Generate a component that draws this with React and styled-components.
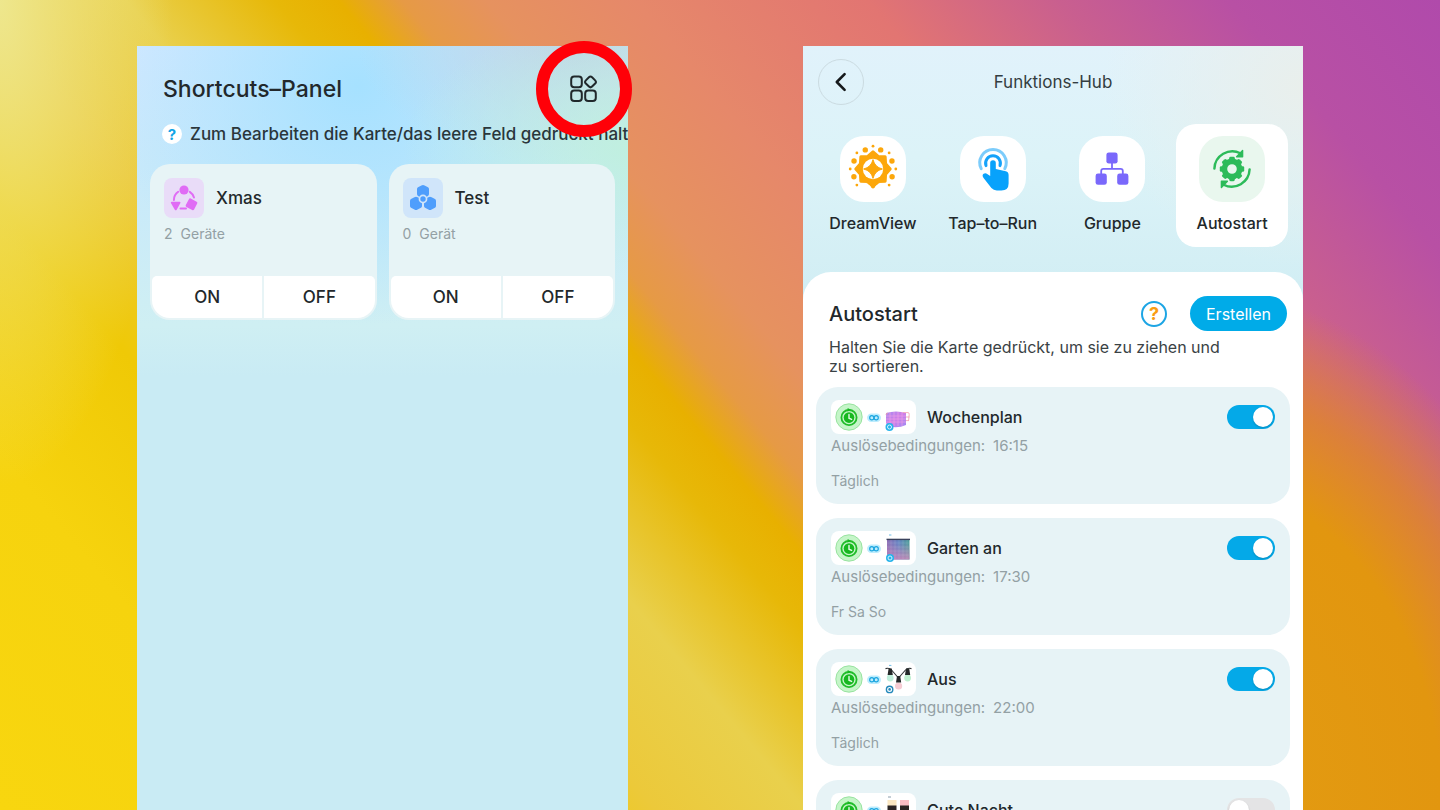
import React from "react";
import styled, { createGlobalStyle, css } from "styled-components";

const GlobalStyle = createGlobalStyle`
  *, *::before, *::after { box-sizing: border-box; }
  body {
    margin: 0;
    font-family: Inter, "Liberation Sans", sans-serif;
    color: #22282b;
  }
  button { font: inherit; color: inherit; cursor: pointer; }
  h1, h2, h3, p, ul { margin: 0; padding: 0; font-weight: 400; }
`;

const Page = styled.div`
  display: grid;
  grid-template-columns: 137fr 491fr 175fr 500fr 137fr;
  height: 100vh;
  padding-top: 46px;
  overflow: hidden;
  background:
    radial-gradient(ellipse 26% 64% at 84% 100%, #e39c12 0%, #e2960f 62%, rgba(222, 134, 40, 0.8) 80%, rgba(222, 120, 80, 0) 100%),
    radial-gradient(ellipse 12% 60% at 0% 0%, rgba(238, 234, 150, 0.9) 0%, rgba(238, 228, 120, 0) 100%),
    linear-gradient(50deg, #f8d60f 0%, #f6d30e 14%, #efc906 24%, #ecc93a 31%, #e9d04c 38%, #e7b808 45%, #e8b000 48%, #e69a45 51%, #e6925f 55%, #e6886a 62%, #e27572 73%, #c95f8f 82%, #b850a4 90%, #b04aab 100%);
`;

const ShortcutsPanel = styled.section`
  grid-column: 2;
  display: flex;
  flex-direction: column;
  min-width: 0;
  background:
    radial-gradient(ellipse 50% 130px at 104% 100px, #bff0dd 0%, rgba(193, 240, 224, 0) 100%),
    radial-gradient(ellipse 45% 120px at 90% 0, #bfd5e6 0%, rgba(194, 216, 232, 0) 100%),
    radial-gradient(ellipse 50% 240px at 45% 40px, #a6e1ff 0%, rgba(165, 224, 255, 0) 100%),
    linear-gradient(180deg, #d0e8ff 0, #c8e9fb 120px, #cfeff3 280px, #c9ebf4 330px);
`;

const PanelHeader = styled.header`
  display: flex;
  align-items: center;
  justify-content: space-between;
  height: 72px;
  padding: 14px 30px 0 26px;
`;

const PanelTitle = styled.h1`
  font-size: 23px;
  line-height: 28px;
  font-weight: 500;
`;

const MenuButton = styled.button`
  position: relative;
  display: grid;
  place-items: center;
  width: 28px;
  height: 28px;
  padding: 0;
  border: 0;
  background: none;
`;

const HighlightRing = styled.span`
  position: absolute;
  inset: -34px;
  z-index: 1;
  border: 12px solid #ff0008;
  border-radius: 50%;
  pointer-events: none;
`;

const Hint = styled.p`
  display: flex;
  align-items: center;
  gap: 8px;
  height: 32px;
  padding-left: 25px;
  overflow: hidden;
  white-space: nowrap;
  font-size: 17px;
  font-weight: 500;
  color: #2a363b;
`;

const HintMark = styled.span`
  flex: none;
  display: grid;
  place-items: center;
  width: 20px;
  height: 20px;
  border-radius: 50%;
  background: #fff;
  color: #12a4e6;
  font-size: 15px;
  font-weight: 700;
`;

const ShortcutGrid = styled.div`
  display: grid;
  grid-template-columns: 1fr 1fr;
  gap: 12px;
  padding: 14px 13px;
`;

const ShortcutCard = styled.article`
  display: flex;
  flex-direction: column;
  justify-content: space-between;
  height: 156px;
  padding: 2px;
  border-radius: 20px;
  background: #e7f4f6;
`;

const ShortcutInfo = styled.div`
  padding: 12px 12px 0;
`;

const ShortcutHead = styled.div`
  display: flex;
  align-items: center;
  gap: 12px;
`;

const ShortcutTile = styled.span`
  display: grid;
  place-items: center;
  width: 40px;
  height: 40px;
  border-radius: 8px;
  background: ${(p) => p.$tint};
`;

const ShortcutName = styled.h2`
  font-size: 17px;
  font-weight: 500;
`;

const Muted = styled.p`
  display: flex;
  gap: 8px;
  font-size: 14px;
  line-height: 20px;
  color: #93a0a4;
`;

const DeviceCount = styled(Muted)`
  margin-top: 6px;
`;

const ButtonPair = styled.div`
  display: grid;
  grid-template-columns: 1fr 1fr;
  gap: 2px;
`;

const SwitchButton = styled.button`
  height: 42px;
  padding: 0;
  border: 0;
  background: #fff;
  font-size: 17px;
  font-weight: 500;
  border-radius: ${(p) => (p.$side === "left" ? "5px 0 0 18px" : "0 5px 18px 0")};
`;

const HubPanel = styled.section`
  grid-column: 4;
  display: flex;
  flex-direction: column;
  min-width: 0;
  overflow: hidden;
  background:
    radial-gradient(ellipse 40% 180px at 100% 40px, #e9efec 0%, rgba(232, 239, 238, 0) 100%),
    linear-gradient(180deg, #e1f2fb 0, #dcf3f8 110px, #d2eef4 240px);
`;

const HubHeader = styled.header`
  display: grid;
  grid-template-columns: 46px 1fr 46px;
  align-items: center;
  padding: 13px 15px 0;
`;

const BackButton = styled.button`
  display: grid;
  place-items: center;
  width: 46px;
  height: 46px;
  padding: 0;
  border: 1px solid #cbdbe1;
  border-radius: 50%;
  background: none;
`;

const HubTitle = styled.h1`
  text-align: center;
  font-size: 17px;
  color: #333d41;
`;

const TabBar = styled.nav`
  display: grid;
  grid-template-columns: repeat(4, 1fr);
  gap: 8px;
  padding: 19px 15px 25px 14px;
`;

const Tab = styled.button`
  display: flex;
  flex-direction: column;
  align-items: center;
  gap: 11px;
  height: 123px;
  padding: 12px 0 0;
  border: 0;
  border-radius: 20px;
  background: ${(p) => (p.$active ? "#fff" : "transparent")};
  font-size: 16px;
  line-height: 20px;
  font-weight: 500;
  white-space: nowrap;
`;

const TabIcon = styled.span`
  display: grid;
  place-items: center;
  width: 66px;
  height: 66px;
  border-radius: 24px;
  background: ${(p) => (p.$active ? "#e9f7ee" : "#fff")};
`;

const Sheet = styled.div`
  flex: 1;
  padding: 24px 13px 0;
  border-radius: 28px 28px 0 0;
  background: #fff;
`;

const SheetHeader = styled.div`
  display: flex;
  align-items: center;
  padding: 0 3px 0 13px;
`;

const SheetTitle = styled.h2`
  flex: 1;
  font-size: 20px;
  font-weight: 500;
`;

const HelpButton = styled.button`
  display: grid;
  place-items: center;
  width: 26px;
  height: 26px;
  margin-right: 23px;
  padding: 0;
  border: 2px solid #1da5e4;
  border-radius: 50%;
  background: #fff;
  color: #fa9d14;
  font-size: 18px;
  line-height: 20px;
  font-weight: 700;
`;

const CreateButton = styled.button`
  width: 97px;
  height: 35px;
  padding: 0;
  border: 0;
  border-radius: 18px;
  background: #00abe8;
  color: #fff;
  font-size: 16px;
`;

const SheetText = styled.p`
  max-width: 420px;
  padding: 7px 0 0 13px;
  font-size: 16px;
  line-height: 19px;
  color: #3a4245;
`;

const RuleList = styled.ul`
  display: flex;
  flex-direction: column;
  gap: 14px;
  margin-top: 11px;
  list-style: none;
`;

const RuleCard = styled.li`
  height: 117px;
  padding: 13px 15px;
  border-radius: 22px;
  background: #e7f3f6;
`;

const RuleHead = styled.div`
  display: flex;
  align-items: center;
  gap: 11px;
`;

const RuleThumb = styled.span`
  display: flex;
  width: 85px;
  height: 34px;
  border-radius: 8px;
  background: #fff;
`;

const RuleName = styled.label`
  flex: 1;
  font-size: 16px;
  font-weight: 500;
`;

const Condition = styled(Muted)`
  margin-top: 2px;
  font-size: 15px;
`;

const Days = styled(Muted)`
  margin-top: 15px;
`;

const Toggle = styled.input`
  appearance: none;
  width: 48px;
  height: 24px;
  margin: 0;
  padding: 2px;
  border-radius: 12px;
  background: #e4e4e5;
  cursor: pointer;

  &::before {
    content: "";
    display: block;
    width: 20px;
    height: 20px;
    border-radius: 50%;
    background: #fff;
    box-shadow: 0 1px 2px rgba(0, 0, 0, 0.18);
  }

  ${(p) =>
    p.checked &&
    css`
      background: #04a9e8;
      &::before { margin-left: auto; }
    `}
`;

const GridIcon = () => (
  <svg width="28" height="28" viewBox="0 0 28 28" fill="none" stroke="#20282b" strokeWidth="2">
    <rect x="1.2" y="1.6" width="10.6" height="10.6" rx="3" />
    <rect x="1.2" y="15.4" width="10.6" height="10.6" rx="3" />
    <rect x="15.2" y="15.4" width="10.6" height="10.6" rx="3" />
    <rect x="16.1" y="2.5" width="8.8" height="8.8" rx="2.2" transform="rotate(45 20.5 6.9)" />
  </svg>
);

const XmasIcon = () => (
  <svg width="28" height="28" viewBox="0 0 28 28" fill="#e06cf5">
    <circle cx="14" cy="6" r="4.6" />
    <path d="M8.2 7.8A10 10 0 0 0 3.9 16M19.8 7.8a10 10 0 0 1 4.2 5.8M10.5 24.6h5.5" fill="none" stroke="#e06cf5" strokeWidth="2" strokeLinecap="round" />
    <path d="M1.6 17.8h8.1q1.2.2.7 1.3l-3.7 6.6q-1 1-1.9 0L.9 19.1q-.4-1.1.7-1.3z" />
    <rect x="16.8" y="15.6" width="9.4" height="9.4" rx="1.4" transform="rotate(28 21.5 20.3)" />
  </svg>
);

const HEX = "M-1.6 -6.2Q0 -7.2 1.6 -6.2L5 -4.3Q6 -3.7 6 -2.5V2.5Q6 3.7 5 4.3L1.6 6.2Q0 7.2 -1.6 6.2L-5 4.3Q-6 3.7 -6 2.5V-2.5Q-6 -3.7 -5 -4.3Z";

const TestIcon = () => (
  <svg width="28" height="28" viewBox="0 0 28 28" fill="#4f9efc">
    <path d={HEX} transform="translate(14 7.6)" />
    <path d={HEX} transform="translate(7 19.4)" />
    <path d={HEX} transform="translate(21 19.4)" />
    <circle cx="14" cy="15" r="4.4" fill="#d0e5fa" />
    <circle cx="14" cy="15" r="2.7" />
  </svg>
);

const BackIcon = () => (
  <svg width="20" height="20" viewBox="0 0 20 20" fill="none" stroke="#15191b" strokeWidth="2.6" strokeLinecap="round" strokeLinejoin="round">
    <path d="M13.6 2.2 5.8 10l7.8 7.8" />
  </svg>
);

const polar = (r, deg) => {
  const a = (deg * Math.PI) / 180;
  return [25 + r * Math.sin(a), 25 - r * Math.cos(a)];
};

const starPath = (points, outer, inner) =>
  Array.from({ length: points * 2 }, (_, i) => {
    const [x, y] = polar(i % 2 ? inner : outer, (i * 180) / points);
    return `${i ? "L" : "M"}${x.toFixed(2)} ${y.toFixed(2)}`;
  }).join("") + "Z";

const DreamViewIcon = () => (
  <svg width="50" height="50" viewBox="0 0 50 50" fill="#fca70b">
    <path
      d={starPath(8, 17.2, 13.6)}
      stroke="#fca70b"
      strokeWidth="3"
      strokeLinejoin="round"
    />
    <path d="M18 39.5q4 .5 5.4 4.2 1.6 1.6 3.2 0 1.4-3.7 5.4-4.2z" />
    <circle cx="25" cy="25" r="10.2" fill="#fff" />
    <path d="M25 15.6q1.8 7.6 9.4 9.4-7.6 1.8-9.4 9.4-1.8-7.6-9.4-9.4 7.6-1.8 9.4-9.4z" stroke="#fca70b" strokeWidth="1" strokeLinejoin="round" />
    {[-112, -67, -22, 22, 67, 112].map((d) => {
      const [x, y] = polar(20.6, d);
      return <circle key={d} cx={x} cy={y} r="2.7" />;
    })}
    {[-135, -90, -45, 0, 45, 90, 135].map((d) => {
      const [x, y] = polar(22.8, d);
      return <circle key={d} cx={x} cy={y} r="1.4" />;
    })}
  </svg>
);

const TapIcon = () => (
  <svg width="46" height="46" viewBox="0 0 46 46" fill="none">
    <path d="M11.2 22.6a13.2 13.2 0 1 1 23.6 0" stroke="#7cccfb" strokeWidth="3" strokeLinecap="round" />
    <path d="M16 19.6a7.4 7.4 0 1 1 14 0" stroke="#14a2fa" strokeWidth="3" strokeLinecap="round" />
    <path
      d="M20.2 17a2.8 2.8 0 0 1 5.6 0v6l10 2.2q2.8.8 2.8 3.8v8.4q0 7-7.2 7h-4.6q-3.2 0-5.4-2.4l-8-10.2q-1.7-2.4.2-4 1.8-1.2 4 .4l2.6 1.8z"
      fill="#08a2fb"
    />
  </svg>
);

const GroupIcon = () => (
  <svg width="36" height="36" viewBox="0 0 36 36" fill="#7a68fb">
    <rect x="12.4" y="1.4" width="11.2" height="11.2" rx="2.4" />
    <rect x="1.6" y="22.6" width="11.2" height="11.2" rx="2.4" />
    <rect x="23.2" y="22.6" width="11.2" height="11.2" rx="2.4" />
    <path d="M18 12v6M7.2 23v-3q0-2.2 2.2-2.2h17.2q2.2 0 2.2 2.2v3" fill="none" stroke="#7a68fb" strokeWidth="1.8" />
  </svg>
);

const AutoIcon = () => (
  <svg width="42" height="42" viewBox="0 0 42 42" fill="#2dbb5a">
    <circle cx="21" cy="21" r="7.6" fill="none" stroke="#2dbb5a" strokeWidth="5.6" />
    {Array.from({ length: 8 }, (_, i) => (
      <rect key={i} x="18.2" y="8.8" width="5.6" height="4.6" rx="1.4" transform={`rotate(${i * 45} 21 21)`} />
    ))}
    <path d="M3.4 20.6A18 18 0 0 1 29.4 5.2M38.6 21.4A18 18 0 0 1 12.6 36.8" fill="none" stroke="#2dbb5a" strokeWidth="2.4" strokeLinecap="round" />
    <path d="M31.6 2.6v6.2h-6zM10.4 39.4v-6.2h6z" stroke="#2dbb5a" strokeWidth="1.4" strokeLinejoin="round" />
  </svg>
);

const BadgeDot = ({ cx = 59, cy = 26.5 }) => (
  <>
    <circle cx={cx} cy={cy} r="4" fill="#27b4ea" />
    <circle cx={cx} cy={cy} r="2" fill="none" stroke="#d6f3ff" strokeWidth="1" />
  </>
);

const CurtainArt = () => (
  <>
    <defs>
      <linearGradient id="strip" x1="0" y1="0" x2="1" y2="1">
        <stop offset="0" stopColor="#a78af0" />
        <stop offset=".5" stopColor="#cf7ee8" />
        <stop offset="1" stopColor="#9d8bf4" />
      </linearGradient>
    </defs>
    <path d="M55 13q10-3 20 0v12q-9 4-18 1l-2-3z" fill="url(#strip)" />
    <path d="M55 16h20M55 19h20M55 22h20M59 12v14M63 12v14M67 12v14M71 12v14" stroke="#ec9fe6" strokeWidth=".7" fill="none" />
    <path d="M72 12.6h5q1.4 0 1.2 2l-.6 6M75 17h3.4M75 20.6h3M57 13q-2 0-2 2" stroke="#f19cab" strokeWidth=".8" fill="none" />
    <BadgeDot cx={58.5} cy={27} />
  </>
);

const MatrixArt = () => (
  <>
    <defs>
      <linearGradient id="matrix" x1="0" y1="0" x2="1" y2="0">
        <stop offset="0" stopColor="#8e6fb6" />
        <stop offset=".5" stopColor="#6684c2" />
        <stop offset="1" stopColor="#4c9c98" />
      </linearGradient>
      <linearGradient id="matrixGlow" x1="0" y1="0" x2="0" y2="1">
        <stop offset=".2" stopColor="#cc86ba" stopOpacity="0" />
        <stop offset="1" stopColor="#cc86ba" stopOpacity=".85" />
      </linearGradient>
    </defs>
    <rect x="56" y="8" width="22.5" height="20.5" fill="url(#matrix)" />
    <rect x="56" y="8" width="22.5" height="20.5" fill="url(#matrixGlow)" />
    <path d="M55.5 8.4h23.5" stroke="#39415c" strokeWidth="1.4" />
    <path d="M60 9v19M64 9v19M68 9v19M72 9v19M76 9v19M56 12h22M56 16h22M56 20h22M56 24h22" stroke="#fff" strokeOpacity=".16" strokeWidth=".7" />
    <path d="M58 4h2.4" stroke="#70bde6" strokeWidth="1" />
    <BadgeDot cx={59} cy={27} />
  </>
);

const BulbsArt = () => (
  <>
    <path d="M54.5 6.6q4-1 6 1.4l7 8 7-8q2-2.4 6-1.4" fill="none" stroke="#333638" strokeWidth="1.1" />
    <circle cx="59.2" cy="16" r="3.4" fill="#bfeedb" />
    <circle cx="67.6" cy="24" r="3.6" fill="#f5cbd3" />
    <circle cx="76.6" cy="16" r="3.4" fill="#bff0d0" />
    <path d="M57.6 6.4h3.2l1 6.6h-5.2zM66 14h3.2l1 6.4H65zM75 6.4h3.2l1 6.6H74z" fill="#252829" />
    <path d="M58 3.4h2.4" stroke="#70bde6" strokeWidth="1" />
    <circle cx="58.6" cy="27.4" r="3.2" fill="none" stroke="#2589bb" strokeWidth="1.4" />
    <circle cx="58.6" cy="27.4" r="1.3" fill="#2589bb" />
  </>
);

const LampsArt = () => (
  <>
    <rect x="56.5" y="7" width="9" height="6" fill="#fae7c2" />
    <rect x="69" y="7" width="9" height="6" fill="#f9bcc4" />
    <path d="M56.5 12.5h9V30h-9zM69 12.5h9V30h-9z" fill="#2a2424" />
    <path d="M57 4h3" stroke="#8a9cab" strokeWidth="1" />
    <BadgeDot />
  </>
);

const ThumbArt = ({ children }) => (
  <svg width="85" height="34" viewBox="0 0 85 34" aria-hidden="true">
    <circle cx="18" cy="17" r="13.2" fill="#c5f5c8" stroke="#92e09a" strokeWidth=".9" />
    <circle cx="18" cy="17.6" r="7.6" fill="none" stroke="#21bd2a" strokeWidth="1.8" />
    <circle cx="18" cy="17.6" r="5.3" fill="#16b81f" />
    <path d="M18 14.4v3.8l2.6 1.2" stroke="#e4fae5" strokeWidth="1.4" fill="none" strokeLinecap="round" />
    <path d="M16.6 8v3.6l3.2-1.8z" fill="#17b721" />
    <rect x="36" y="13.4" width="14" height="8.6" rx="4.3" fill="#bcecfd" />
    <circle cx="40.8" cy="17.7" r="2.1" fill="none" stroke="#1ba5e0" strokeWidth="1.2" />
    <circle cx="45.2" cy="17.7" r="2.1" fill="none" stroke="#1ba5e0" strokeWidth="1.2" />
    {children}
  </svg>
);

const shortcuts = [
  { name: "Xmas", count: "2", unit: "Geräte", tint: "#e9dcf8", Icon: XmasIcon },
  { name: "Test", count: "0", unit: "Gerät", tint: "#d0e5fa", Icon: TestIcon },
];

const tabs = [
  { label: "DreamView", Icon: DreamViewIcon },
  { label: "Tap–to–Run", Icon: TapIcon },
  { label: "Gruppe", Icon: GroupIcon },
  { label: "Autostart", Icon: AutoIcon },
];

const initialRules = [
  { id: "wochenplan", name: "Wochenplan", time: "16:15", days: "Täglich", on: true, Art: CurtainArt },
  { id: "garten", name: "Garten an", time: "17:30", days: "Fr Sa So", on: true, Art: MatrixArt },
  { id: "aus", name: "Aus", time: "22:00", days: "Täglich", on: true, Art: BulbsArt },
  { id: "nacht", name: "Gute Nacht", time: "", days: "", on: false, Art: LampsArt },
];

export default function App() {
  const [active, setActive] = React.useState("Autostart");
  const [rules, setRules] = React.useState(initialRules);
  const toggleRule = (id) =>
    setRules((list) => list.map((r) => (r.id === id ? { ...r, on: !r.on } : r)));

  return (
    <Page>
      <GlobalStyle />
      <ShortcutsPanel>
        <PanelHeader>
          <PanelTitle>Shortcuts–Panel</PanelTitle>
          <MenuButton type="button" aria-label="Funktions-Hub">
            <GridIcon />
            <HighlightRing />
          </MenuButton>
        </PanelHeader>
        <Hint>
          <HintMark>?</HintMark>
          Zum Bearbeiten die Karte/das leere Feld gedrückt halten
        </Hint>
        <ShortcutGrid>
          {shortcuts.map(({ name, count, unit, tint, Icon }) => (
            <ShortcutCard key={name}>
              <ShortcutInfo>
                <ShortcutHead>
                  <ShortcutTile $tint={tint}>
                    <Icon />
                  </ShortcutTile>
                  <ShortcutName>{name}</ShortcutName>
                </ShortcutHead>
                <DeviceCount>
                  <span>{count}</span>
                  <span>{unit}</span>
                </DeviceCount>
              </ShortcutInfo>
              <ButtonPair>
                <SwitchButton type="button" $side="left">ON</SwitchButton>
                <SwitchButton type="button" $side="right">OFF</SwitchButton>
              </ButtonPair>
            </ShortcutCard>
          ))}
        </ShortcutGrid>
      </ShortcutsPanel>

      <HubPanel>
        <HubHeader>
          <BackButton type="button" aria-label="Zurück">
            <BackIcon />
          </BackButton>
          <HubTitle>Funktions-Hub</HubTitle>
        </HubHeader>
        <TabBar>
          {tabs.map(({ label, Icon }) => (
            <Tab key={label} type="button" $active={label === active} onClick={() => setActive(label)}>
              <TabIcon $active={label === active}>
                <Icon />
              </TabIcon>
              {label}
            </Tab>
          ))}
        </TabBar>
        <Sheet>
          <SheetHeader>
            <SheetTitle>Autostart</SheetTitle>
            <HelpButton type="button">?</HelpButton>
            <CreateButton type="button">Erstellen</CreateButton>
          </SheetHeader>
          <SheetText>Halten Sie die Karte gedrückt, um sie zu ziehen und zu sortieren.</SheetText>
          <RuleList>
            {rules.map(({ id, name, time, days, on, Art }) => (
              <RuleCard key={id}>
                <RuleHead>
                  <RuleThumb>
                    <ThumbArt>
                      <Art />
                    </ThumbArt>
                  </RuleThumb>
                  <RuleName htmlFor={id}>{name}</RuleName>
                  <Toggle id={id} type="checkbox" role="switch" checked={on} onChange={() => toggleRule(id)} />
                </RuleHead>
                {time && (
                  <Condition>
                    <span>Auslösebedingungen:</span>
                    <span>{time}</span>
                  </Condition>
                )}
                {days && <Days>{days}</Days>}
              </RuleCard>
            ))}
          </RuleList>
        </Sheet>
      </HubPanel>
    </Page>
  );
}
